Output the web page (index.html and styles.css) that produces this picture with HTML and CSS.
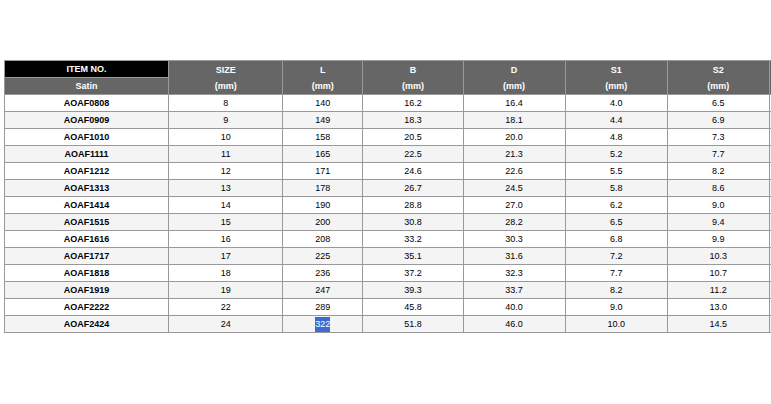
FILE: index.html
```html
<!DOCTYPE html>
<html>
<head>
<meta charset="utf-8">
<link rel="stylesheet" href="styles.css">
</head>
<body>
<table class="spec">
  <colgroup>
    <col class="c-item"><col class="c-size"><col class="c-l"><col class="c-b"><col class="c-d"><col class="c-s1"><col class="c-s2"><col class="c-x">
  </colgroup>
  <thead>
    <tr>
      <th class="h-item">ITEM NO.</th>
      <th class="h-col" rowspan="2">SIZE<br>(mm)</th>
      <th class="h-col" rowspan="2">L<br>(mm)</th>
      <th class="h-col" rowspan="2">B<br>(mm)</th>
      <th class="h-col" rowspan="2">D<br>(mm)</th>
      <th class="h-col" rowspan="2">S1<br>(mm)</th>
      <th class="h-col" rowspan="2">S2<br>(mm)</th>
      <th class="h-col" rowspan="2"></th>
    </tr>
    <tr>
      <th class="h-sub">Satin</th>
    </tr>
  </thead>
  <tbody>
    <tr><td class="item">AOAF0808</td><td>8</td><td>140</td><td>16.2</td><td>16.4</td><td>4.0</td><td>6.5</td><td></td></tr>
    <tr><td class="item">AOAF0909</td><td>9</td><td>149</td><td>18.3</td><td>18.1</td><td>4.4</td><td>6.9</td><td></td></tr>
    <tr><td class="item">AOAF1010</td><td>10</td><td>158</td><td>20.5</td><td>20.0</td><td>4.8</td><td>7.3</td><td></td></tr>
    <tr><td class="item">AOAF1111</td><td>11</td><td>165</td><td>22.5</td><td>21.3</td><td>5.2</td><td>7.7</td><td></td></tr>
    <tr><td class="item">AOAF1212</td><td>12</td><td>171</td><td>24.6</td><td>22.6</td><td>5.5</td><td>8.2</td><td></td></tr>
    <tr><td class="item">AOAF1313</td><td>13</td><td>178</td><td>26.7</td><td>24.5</td><td>5.8</td><td>8.6</td><td></td></tr>
    <tr><td class="item">AOAF1414</td><td>14</td><td>190</td><td>28.8</td><td>27.0</td><td>6.2</td><td>9.0</td><td></td></tr>
    <tr><td class="item">AOAF1515</td><td>15</td><td>200</td><td>30.8</td><td>28.2</td><td>6.5</td><td>9.4</td><td></td></tr>
    <tr><td class="item">AOAF1616</td><td>16</td><td>208</td><td>33.2</td><td>30.3</td><td>6.8</td><td>9.9</td><td></td></tr>
    <tr><td class="item">AOAF1717</td><td>17</td><td>225</td><td>35.1</td><td>31.6</td><td>7.2</td><td>10.3</td><td></td></tr>
    <tr><td class="item">AOAF1818</td><td>18</td><td>236</td><td>37.2</td><td>32.3</td><td>7.7</td><td>10.7</td><td></td></tr>
    <tr><td class="item">AOAF1919</td><td>19</td><td>247</td><td>39.3</td><td>33.7</td><td>8.2</td><td>11.2</td><td></td></tr>
    <tr><td class="item">AOAF2222</td><td>22</td><td>289</td><td>45.8</td><td>40.0</td><td>9.0</td><td>13.0</td><td></td></tr>
    <tr><td class="item">AOAF2424</td><td>24</td><td><span class="sel">322</span></td><td>51.8</td><td>46.0</td><td>10.0</td><td>14.5</td><td></td></tr>
  </tbody>
</table>
</body>
</html>
```

FILE: styles.css
```css
html, body {
  margin: 0;
  overflow: hidden;
  background: #fff;
}
body {
  padding: 60px 0 0 4px;
  font-family: "Liberation Sans", Arial, sans-serif;
  font-size: 9px;
  color: #000;
}
.spec {
  border-collapse: separate;
  border-spacing: 0;
  table-layout: fixed;
  width: 866px;
  border-top: 1px solid #999;
  border-left: 1px solid #999;
}
.c-item { width: 164px; }
.c-size { width: 114px; }
.c-l { width: 80px; }
.c-b { width: 100px; }
.c-d { width: 102px; }
.c-s1 { width: 102px; }
.c-s2 { width: 102px; }
.c-x { width: 100px; }
.spec th, .spec td {
  box-sizing: border-box;
  padding: 0;
  border-right: 1px solid #999;
  border-bottom: 1px solid #999;
  text-align: center;
  vertical-align: middle;
  height: 17px;
  line-height: 14px;
  white-space: nowrap;
  overflow: hidden;
}
.spec th {
  color: #fff;
  font-weight: bold;
  background: #666;
}
.spec .h-col {
  line-height: 16px;
  padding-top: 1px;
}
.spec .h-item {
  background: #000;
}
.spec .h-sub {
  background: #666;
}
.spec td.item {
  font-weight: bold;
}
.spec tbody tr:nth-child(even) td {
  background: #f4f4f4;
}
.spec tbody tr:nth-child(odd) td {
  background: #fff;
}
.sel {
  background: #3a6cd4;
  color: #fff;
  padding: 2px 0 3px;
}
```
